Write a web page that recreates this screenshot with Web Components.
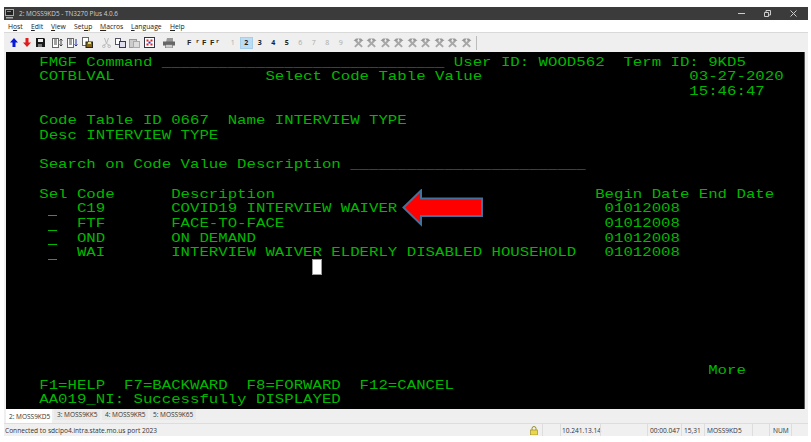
<!DOCTYPE html>
<html><head><meta charset="utf-8"><style>
html,body{margin:0;padding:0;background:#fff;height:100%;overflow:hidden}
body{font-family:"Open Sans","Liberation Sans",sans-serif}
</style></head><body>
<tn-window>
<title-bar></title-bar>
<menu-bar></menu-bar>
<tool-bar></tool-bar>
<term-screen></term-screen>
<tab-strip></tab-strip>
<status-bar></status-bar>
</tn-window>
<script>
function el(name,html){customElements.define(name,class extends HTMLElement{constructor(){super();this.attachShadow({mode:'open'}).innerHTML=html}})}
el('tn-window',`<style>:host{display:flex;flex-direction:column;width:804px;margin:7px 0 0 4px;background:#f0f0f0}</style><slot></slot>`);
el('title-bar',`<style>:host{display:flex;align-items:center;height:13px;background:#3b3b3b;color:#d0d0d0;font:6.400px "Open Sans",sans-serif}
.t{margin-left:5px;flex:1;white-space:nowrap}
svg{display:block;flex:none}
.ic{margin-left:1px}
.b{display:flex;gap:19px;margin-right:11px;align-items:center}
</style>
<svg class="ic" width="9" height="10" viewBox="0 0 9 10"><rect x=".5" y=".5" width="8" height="6" fill="#222" stroke="#aaa"/><rect x="2" y="2" width="4" height="1" fill="#5a5"/><rect x="1" y="8" width="7" height="1.500" fill="#aaa"/></svg>
<span class="t">2: MOSS9KD5 - TN3270 Plus 4.0.6</span>
<div class="b">
<svg width="7" height="7" viewBox="0 0 7 7"><path d="M0 3.500H7" stroke="#ccc" stroke-width="1"/></svg>
<svg width="7" height="7" viewBox="0 0 7 7"><path d="M.5 2.500h4v4h-4zM2 2.500v-2h4.500v4.500h-2" fill="none" stroke="#ccc"/></svg>
<svg width="7" height="7" viewBox="0 0 7 7"><path d="M.5.500L6.500 6.500M6.500.500L.5 6.500" stroke="#ccc"/></svg>
</div>`);
el('menu-bar',`<style>:host{display:flex;height:12px;background:#fff;align-items:center;color:#222;font:6.800px "Open Sans",sans-serif;padding-left:4px}u{text-decoration-thickness:.5px;text-underline-offset:1px}span{flex:none}</style>
<span style="width:23px">H<u>o</u>st</span><span style="width:20px"><u>E</u>dit</span><span style="width:23px"><u>V</u>iew</span><span style="width:26px">Set<u>u</u>p</span><span style="width:31px"><u>M</u>acros</span><span style="width:39px"><u>L</u>anguage</span><span><u>H</u>elp</span>`);
const gear=`<svg width="11" height="10" viewBox="0 0 11 10"><path d="M2 3.500L8.500 9.500L9.800 8.300L3.500 2Z" fill="#a8a8a8"/><path d="M9 3.500L2.500 9.500L1.200 8.300L7.500 2Z" fill="#a8a8a8"/><path d="M.5 2.800L3 .5H5.500L4 3.200ZM10.500 2.800L8 .5H5.500L7 3.200Z" fill="#999"/></svg>`;
el('tool-bar',`<style>:host{display:flex;height:19px;align-items:center;background:#efefef;border-top:1px solid #d9d9d9;font:bold 7px "Open Sans",sans-serif;color:#222;padding-left:6px}
svg{display:block;flex:none}
.s{display:flex;align-items:center;flex:none}
.n{width:13.500px;height:12px;display:flex;align-items:center;justify-content:center;flex:none}
.d{color:#aaa;font-weight:400}
.on{background:#bbdcf4;border:1px solid #a8cfe8;box-sizing:border-box}
.f{font:bold 7.500px "Liberation Mono",monospace}
.r{font:bold 5.500px "Liberation Mono",monospace;margin-bottom:2px}
.g{display:flex;gap:2.500px;margin-left:5px;flex:none}
.sep{width:1px;height:14px;background:#bbb;margin-left:4px;flex:none}
</style>
<div class="s" style="gap:5px">
<svg width="8" height="9" viewBox="0 0 8 9"><path d="M4 0L8 4.500H5.500V9H2.500V4.500H0Z" fill="#0a18d8"/></svg>
<svg width="8" height="9" viewBox="0 0 8 9"><path d="M4 9L8 4.500H5.500V0H2.500V4.500H0Z" fill="#e01c1c"/></svg>
<svg width="9" height="9" viewBox="0 0 9 9"><path d="M0 0H8L9 1V9H0Z" fill="#1a1a1a"/><rect x="2" y="1" width="5" height="3" fill="#eee"/><rect x="2" y="6" width="4" height="3" fill="#777"/></svg>
</div>
<div class="s" style="gap:4px;margin-left:7px">
<svg width="11" height="10" viewBox="0 0 11 10"><rect x=".5" y=".5" width="6" height="9" fill="#fff" stroke="#666"/><path d="M2 2h3M2 4h3M2 6h3M9 1v7M7.500 2.500L9 1l1.500 1.500M7.500 6.500L9 8l1.500-1.500" stroke="#444" fill="none"/></svg>
<svg width="11" height="10" viewBox="0 0 11 10"><rect x=".5" y=".5" width="6" height="9" fill="#fff" stroke="#666"/><path d="M2 2h3M2 4h3M2 6h3" stroke="#444"/><path d="M9 1v7M7.500 6.500L9 8l1.500-1.500" stroke="#23a" fill="none"/></svg>
<svg width="11" height="11" viewBox="0 0 11 11"><rect x=".5" y=".5" width="6" height="8" fill="#fff" stroke="#666"/><rect x="4" y="5" width="6.500" height="5.500" fill="#861" stroke="#222"/><rect x="6" y="5" width="3" height="2" fill="#dd8"/></svg>
</div>
<div class="s" style="gap:3.500px;margin-left:9px">
<svg width="9" height="10" viewBox="0 0 9 10"><path d="M2.500 0L4.500 5.500L6.500 0M4.500 5.500L1.500 7.500M4.500 5.500L7.500 7.500" stroke="#bbb" fill="none"/><circle cx="1.800" cy="8.300" r="1.300" fill="none" stroke="#bbb"/><circle cx="7.200" cy="8.300" r="1.300" fill="none" stroke="#bbb"/></svg>
<svg width="11" height="10" viewBox="0 0 11 10"><rect x=".5" y=".5" width="5" height="6" fill="#fff" stroke="#556"/><rect x="4.500" y="3.500" width="6" height="6" fill="#dde" stroke="#23a"/></svg>
<svg width="11" height="10" viewBox="0 0 11 10"><rect x=".5" y="1.500" width="7" height="8" fill="#ccc" stroke="#999"/><rect x="4.500" y="3.500" width="6" height="6" fill="#ddd" stroke="#aaa"/></svg>
</div>
<svg style="margin-left:4px" width="11" height="11" viewBox="0 0 11 11"><rect x=".5" y=".5" width="10" height="10" fill="#fff" stroke="#334"/><path d="M2.500 2.500h2v2h-2zM6.500 6.500h2v2h-2z" fill="#d22"/><path d="M6.500 2.500h2v2h-2zM2.500 6.500h2v2h-2z" fill="#d22"/><path d="M4.500 4.500h2v2h-2z" fill="#23b"/></svg>
<svg style="margin-left:8px" width="12" height="10" viewBox="0 0 12 10"><path d="M3 4L4 0H10L10 4Z" fill="#999"/><rect x="0" y="3.500" width="12" height="4" fill="#666"/><rect x="2.500" y="6.500" width="7" height="3.500" fill="#ccc" stroke="#555" stroke-width=".5"/></svg>
<div class="s" style="margin-left:12px;width:35px">
<span class="f" style="width:9px">F</span><span class="r" style="width:3px">r</span><span class="f" style="width:8px;margin-left:3px">F</span><span class="f" style="width:6px">F</span><span class="r">r</span>
</div>
<div class="s" style="margin-left:4px">
<span class="n d">1</span><span class="n on">2</span><span class="n">3</span><span class="n">4</span><span class="n">5</span><span class="n d">6</span><span class="n d">7</span><span class="n d">8</span><span class="n d">9</span>
</div>
<div class="g">${gear.repeat(9)}</div>
<div class="sep"></div>`);
const rows=[
 '   FMGF Command ______________________________ User ID: WOOD562  Term ID: 9KD5',
 '   COTBLVAL                Select Code Table Value                      03-27-2020',
 '                                                                        15:46:47',
 '',
 '   Code Table ID 0667  Name INTERVIEW TYPE',
 '   Desc INTERVIEW TYPE',
 '',
 '   Search on Code Value Description _________________________',
 '',
 '   Sel Code      Description                                  Begin Date End Date',
 '       C19       COVID19 INTERVIEW WAIVER                      01012008',
 '       FTF       FACE-TO-FACE                                  01012008',
 '       OND       ON DEMAND                                     01012008',
 '       WAI       INTERVIEW WAIVER ELDERLY DISABLED HOUSEHOLD   01012008',
 '','','','','','','',
 '                                                                          More',
 '   F1=HELP  F7=BACKWARD  F8=FORWARD  F12=CANCEL',
 '   AA019_NI: Successfully DISPLAYED',
];
el('term-screen',`<style>:host{display:block;height:357px;margin:0 0 0 2px;width:799px;background:#000;border-right:1px solid #555;position:relative;overflow:hidden;color:#00b800;font:13px/14.700px "Liberation Mono",monospace;box-sizing:border-box;padding:3.500px 0 0 0}
.l{height:14.700px;white-space:pre;margin-left:4.700px;transform:scaleX(1.2077);transform-origin:0 0}
.u{position:absolute;width:9px;height:1px;background:#00b800;left:42px}
.cur{position:absolute;left:306px;top:207px;width:8px;height:14px;background:#fff;border:1px solid #999}
svg{position:absolute;left:396px;top:137px}
</style>
${rows.map(r=>`<div class="l">${r||' '}</div>`).join('')}
<i class="u" style="top:163px"></i><i class="u" style="top:178px"></i><i class="u" style="top:192px"></i><i class="u" style="top:207px"></i>
<div class="cur"></div>
<svg width="82" height="38" viewBox="0 0 82 38"><path d="M1.500 18.500L19 1.500V9.500H80V27H19V35.500Z" fill="#f00" stroke="#41719c" stroke-width="2"/></svg>`);
el('tab-strip',`<style>:host{display:flex;height:15px;background:#efefef;color:#333;font:6.500px "Open Sans",sans-serif;padding-left:2px;border-bottom:1px solid #ddd;box-sizing:border-box}
span{display:flex;align-items:center;box-sizing:border-box;padding-left:3px;background:#e9e9e9;height:11px;white-space:nowrap;width:46px;margin-right:2px;flex:none}
.a{background:#fff;height:14px;width:46px;padding-left:3px;margin-right:2px}</style>
<span class="a">2: MOSS9KD5</span><span>3: MOSS9KK5</span><span>4: MOSS9KR5</span><span>5: MOSS9K65</span>`);
el('status-bar',`<style>:host{display:flex;height:12px;align-items:center;background:#f0f0f0;color:#333;font:6.600px "Open Sans",sans-serif;padding-left:1px}
.m{flex:1;white-space:nowrap}
.c{height:12px;display:flex;align-items:center;border-left:1px solid #ddd;box-sizing:border-box;padding-left:2px;flex:none;white-space:nowrap}
svg{display:block}
</style>
<span class="m">Connected to sdcipo4.intra.state.mo.us port 2023</span>
<span class="c" style="border:0;width:14px"><svg width="8" height="9" viewBox="0 0 8 9"><path d="M2 4V2.500a2 2 0 0 1 4 0V4" fill="none" stroke="#998a30"/><rect x=".5" y="4" width="7" height="5" fill="#e8d84a" stroke="#a09030" stroke-width=".7"/></svg></span>
<span class="c" style="width:18px"></span>
<span class="c" style="width:40px;padding-left:1px">10.241.13.14</span>
<span class="c" style="width:47px"></span>
<span class="c" style="width:34px">00:00.047</span>
<span class="c" style="width:23px">15,31</span>
<span class="c" style="width:48px">MOSS9KD5</span>
<span class="c" style="width:17px"></span>
<span class="c" style="width:22px;padding-left:3px">NUM</span>
<span class="c" style="width:17px"></span>`);
</script>
</body></html>
